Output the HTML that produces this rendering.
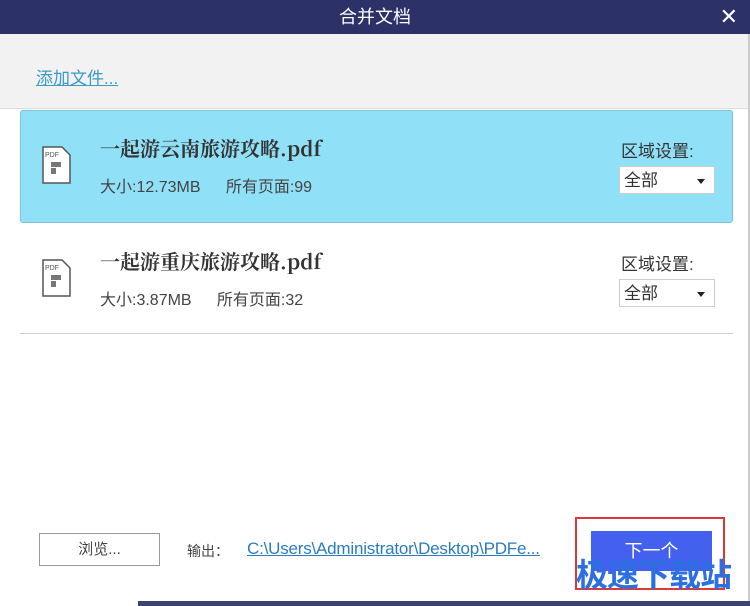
<!DOCTYPE html>
<html><head><meta charset="utf-8"><style>
body{margin:0;width:750px;height:606px;background:#fff;position:relative;overflow:hidden;font-family:"Liberation Sans","Microsoft YaHei","Noto Sans CJK SC",sans-serif;}
.a{position:absolute}
.title{left:0;top:0;width:750px;height:34px;background:#2c3268;color:#fff;font-size:18px;text-align:center;line-height:34px}
.gray{left:0;top:34px;width:750px;height:74px;background:#f2f2f2;border-bottom:1px solid #ddd}
.item{left:20px;width:713px;height:110px}
.name{font-size:20px;font-weight:bold;color:#333;font-family:"Noto Serif CJK SC","Liberation Serif",serif}
.info{font-size:16px;color:#444}
.sel{width:96px;height:28px;background:#fff;border:1px solid #ccc;font-size:17px;line-height:28px;color:#333;box-sizing:border-box;padding-left:4px}
.sel:after{content:"";position:absolute;right:9px;top:12px;border-left:4px solid transparent;border-right:4px solid transparent;border-top:5px solid #222}
</style></head><body>
<div class="a title">合并文档</div>
<div class="a" style="right:12px;top:4px;color:#fff;font-size:22px">✕</div>
<div class="a gray"></div>
<div class="a" style="left:36px;top:64px;font-size:17px;color:#3a9bc4;text-decoration:underline">添加文件...</div>
<div class="a" style="left:748px;top:34px;width:2px;height:572px;background:#ccc"></div>

<div class="a item" style="top:110px;background:#90e0f7;border:1px solid #7cc4dc;border-radius:3px;box-sizing:border-box;height:113px"></div>
<svg class="a" style="left:41px;top:145px" width="32" height="40" viewBox="0 0 32 40"><path d="M2 2h19l8 8v28H2z" fill="#fff" stroke="#555" stroke-width="1.5"/><text x="4" y="12" font-size="7" font-family="Liberation Sans" fill="#555">PDF</text><rect x="10" y="17" width="10" height="5" fill="#777"/><rect x="10" y="23" width="5" height="6" fill="#777"/></svg>
<div class="a name" style="left:100px;top:133px">一起游云南旅游攻略.pdf</div>
<div class="a info" style="left:100px;top:173px;word-spacing:4px">大小:12.73MB&nbsp;&nbsp;&nbsp;所有页面:99</div>
<div class="a" style="left:621px;top:137px;font-size:17px;color:#333">区域设置:</div>
<div class="a sel" style="left:619px;top:166px">全部</div>

<svg class="a" style="left:41px;top:258px" width="32" height="40" viewBox="0 0 32 40"><path d="M2 2h19l8 8v28H2z" fill="#fff" stroke="#555" stroke-width="1.5"/><text x="4" y="12" font-size="7" font-family="Liberation Sans" fill="#555">PDF</text><rect x="10" y="17" width="10" height="5" fill="#777"/><rect x="10" y="23" width="5" height="6" fill="#777"/></svg>
<div class="a name" style="left:100px;top:246px">一起游重庆旅游攻略.pdf</div>
<div class="a info" style="left:100px;top:286px;word-spacing:4px">大小:3.87MB&nbsp;&nbsp;&nbsp;所有页面:32</div>
<div class="a" style="left:621px;top:250px;font-size:17px;color:#333">区域设置:</div>
<div class="a sel" style="left:619px;top:279px">全部</div>
<div class="a" style="left:20px;top:333px;width:713px;height:1px;background:#ccc"></div>

<div class="a" style="left:39px;top:533px;width:121px;height:33px;border:1px solid #999;box-sizing:border-box;text-align:center;line-height:31px;font-size:15px;color:#444">浏览...</div>
<div class="a" style="left:187px;top:541px;font-size:14px;color:#444">输出：</div>
<div class="a" style="left:247px;top:539px;font-size:17px;color:#2a7bbf;text-decoration:underline;letter-spacing:-0.2px">C:\Users\Administrator\Desktop\PDFe...</div>
<div class="a" style="left:575px;top:517px;width:150px;height:73px;border:2px solid #d83a3a;box-sizing:border-box"></div>
<div class="a" style="left:591px;top:531px;width:121px;height:40px;background:#4360ef;color:#fff;font-size:18px;text-align:center;line-height:40px">下一个</div>
<div class="a" style="left:576px;top:554px;font-size:32px;color:#2b6fe0;font-weight:bold;letter-spacing:-1px;font-family:'Noto Sans CJK SC',sans-serif;line-height:38px">极速下载站</div>
<div class="a" style="left:138px;top:601px;width:612px;height:5px;background:#3a4470"></div>
</body></html>
